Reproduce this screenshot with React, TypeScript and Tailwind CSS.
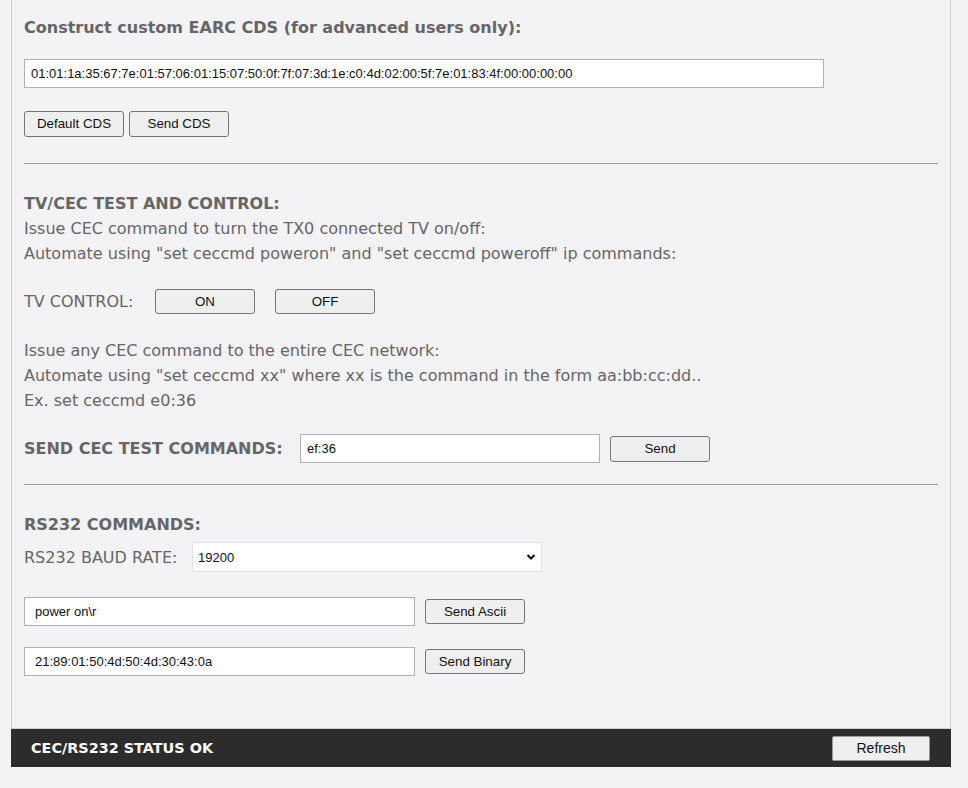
import React from "react";

const btn =
  "h-[26px] w-[100px] rounded-[3px] border border-[#767676] bg-[#efefef] text-[13.33px] text-[#111] font-['Liberation_Sans',Arial,sans-serif] leading-none";
const input =
  "h-[29px] border border-[#b1b1b1] bg-white pl-[6px] text-[13px] text-[#111] font-['Liberation_Sans',Arial,sans-serif] outline-none";

export default function App() {
  return (
    <div className="min-h-[788px] w-[968px] bg-[#f3f2f5] font-['DejaVu_Sans',Verdana,sans-serif] text-[16px] leading-[25px] text-[#666]">
      <div className="ml-[11px] w-[940px] border-x border-b border-[#cfcfcf] px-[12px] pb-[52px] pt-[15px]">
        <div className="font-bold">Construct custom EARC CDS (for advanced users only):</div>
        <input
          className={`${input} mt-[19px] block w-[800px]`}
          defaultValue="01:01:1a:35:67:7e:01:57:06:01:15:07:50:0f:7f:07:3d:1e:c0:4d:02:00:5f:7e:01:83:4f:00:00:00:00"
        />
        <div className="mt-[23px] flex gap-[5px]">
          <button className={btn}>Default CDS</button>
          <button className={btn}>Send CDS</button>
        </div>
        <div className="mt-[26px] h-px w-[914px] bg-[#9f9f9f]" />

        <div className="mt-[27px] font-bold">TV/CEC TEST AND CONTROL:</div>
        <div>Issue CEC command to turn the TX0 connected TV on/off:</div>
        <div>Automate using "set ceccmd poweron" and "set ceccmd poweroff" ip commands:</div>

        <div className="mt-[23px] flex h-[25px] items-center">
          <span className="w-[131px]">TV CONTROL:</span>
          <button className={`${btn} !h-[25px]`}>ON</button>
          <button className={`${btn} ml-[20px] !h-[25px]`}>OFF</button>
        </div>

        <div className="mt-[24px]">
          <div>Issue any CEC command to the entire CEC network:</div>
          <div>Automate using "set ceccmd xx" where xx is the command in the form aa:bb:cc:dd..</div>
          <div>Ex. set ceccmd e0:36</div>
        </div>

        <div className="mt-[21px] flex h-[29px] items-center">
          <span className="w-[276px] whitespace-nowrap font-bold">SEND CEC TEST COMMANDS:</span>
          <input className={`${input} w-[300px]`} defaultValue="ef:36" />
          <button className={`${btn} ml-[10px]`}>Send</button>
        </div>
        <div className="mt-[21px] h-px w-[914px] bg-[#9f9f9f]" />

        <div className="mt-[27px] font-bold">RS232 COMMANDS:</div>
        <div className="mt-[5px] flex h-[30px] items-center">
          <span className="w-[168px]">RS232 BAUD RATE:</span>
          <div className="relative h-[30px] w-[350px]">
            <select
              defaultValue="19200"
              className="h-[30px] w-[350px] appearance-none border border-[#e3e3e3] bg-white pl-[5px] text-[13px] text-[#111] font-['Liberation_Sans',Arial,sans-serif] outline-none"
            >
              <option>9600</option>
              <option>19200</option>
              <option>38400</option>
              <option>57600</option>
              <option>115200</option>
            </select>
            <svg
              className="pointer-events-none absolute right-[6px] top-[11px]"
              width="10"
              height="8"
              viewBox="0 0 10 8"
            >
              <path d="M1.5 2 L5 5.5 L8.5 2" fill="none" stroke="#111" strokeWidth="2" />
            </svg>
          </div>
        </div>

        <div className="mt-[25px] flex h-[29px] items-center">
          <input className={`${input} w-[391px] pl-[10px]`} defaultValue="power on\r" />
          <button className={`${btn} ml-[10px] !h-[25px]`}>Send Ascii</button>
        </div>
        <div className="mt-[21px] flex h-[29px] items-center">
          <input className={`${input} w-[391px] pl-[10px]`} defaultValue="21:89:01:50:4d:50:4d:30:43:0a" />
          <button className={`${btn} ml-[10px] !h-[25px]`}>Send Binary</button>
        </div>
      </div>
      <div className="ml-[11px] flex h-[38px] w-[940px] items-center justify-between bg-[#2c2c2c] pl-[20px] pr-[21px]">
        <span className="text-[14.4px] font-bold text-white">CEC/RS232 STATUS OK</span>
        <button className="h-[25px] w-[98px] rounded-[2px] border border-[#9a9a9a] bg-[#efefef] text-[14px] text-[#111] font-['Liberation_Sans',Arial,sans-serif] leading-none">
          Refresh
        </button>
      </div>
    </div>
  );
}
